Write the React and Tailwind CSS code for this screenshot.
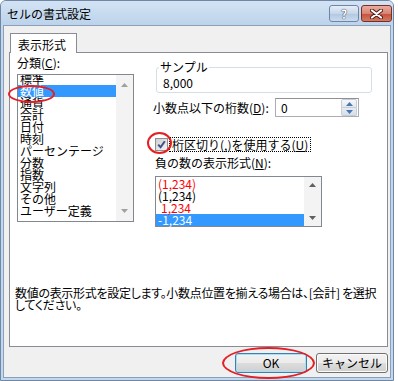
import React from "react";

const categories = ["標準", "数値", "通貨", "会計", "日付", "時刻", "パーセンテージ", "分数", "指数", "文字列", "その他", "ユーザー定義"];

function ScrollArrow({ up, color = "#a0a0a0" }) {
    return (
        <svg width="7" height="4" viewBox="0 0 7 4">
            <path d={up ? "M0 4 L3.5 0 L7 4 Z" : "M0 0 L3.5 4 L7 0 Z"} fill={color} />
        </svg>
    );
}

function Button({ children, primary }) {
    return (
        <div
            className={`w-[72px] h-[20px] flex items-center justify-center rounded-[3px] border ${primary
                ? "border-[#3c7fb1] shadow-[inset_0_0_0_1px_#a6e0f8]"
                : "border-[#707070] shadow-[inset_0_0_0_1px_#fbfbfb]"
                } bg-[linear-gradient(#f2f2f2_0%,#ebebeb_50%,#dddddd_51%,#cfcfcf_100%)]`}
        >
            {children}
        </div>
    );
}

export default function App() {
    return (
        <div className="relative w-[398px] h-[381px] bg-white text-[12px] leading-[12px] text-black font-['Noto_Sans_CJK_JP',sans-serif]">
            <div className="w-[394px] h-[381px] flex flex-col rounded-t-[6px] border border-[#6f87a5] bg-[#c2d8ee]">
                {/* title bar */}
                <div className="h-[24px] flex items-start bg-[linear-gradient(#d3e3f4,#bcd3eb)] rounded-t-[5px]">
                    <span className="mt-[7px] ml-[6px] text-[12px] text-black">セルの書式設定</span>
                    <div className="ml-auto mt-[4px] mr-[1px] flex gap-[2px]">
                        <div className="w-[30px] h-[17px] rounded-[3px] border border-[#6e86a6] bg-[linear-gradient(#e6eef8,#c5d6ea_50%,#b2c7e0_51%,#c9dbef)] flex items-center justify-center text-[12px] leading-[12px] font-bold text-white [text-shadow:0_0_1px_#1f2f44,0_0_1px_#1f2f44]">
                            ?
                        </div>
                        <div className="w-[31px] h-[17px] rounded-[3px] border border-[#7b2e24] bg-[linear-gradient(#e9ada0,#d98372_50%,#c4513d_51%,#d27a62)] flex items-center justify-center">
                            <svg width="13" height="10" viewBox="0 0 13 10">
                                <path d="M2 1.5 L11 8.5 M11 1.5 L2 8.5" stroke="#4a1a14" strokeWidth="4" strokeLinecap="round" />
                                <path d="M2 1.5 L11 8.5 M11 1.5 L2 8.5" stroke="#ffffff" strokeWidth="2.2" strokeLinecap="round" />
                            </svg>
                        </div>
                    </div>
                </div>

                {/* body */}
                <div className="flex-1 mx-[2px] mb-[2px] border border-[#8ba0b8] bg-[#f0f0f0] flex flex-col">
                    <div className="pt-[7px] pl-[6px]">
                        <div className="relative z-10 -mb-px w-[67px] h-[20px] border border-b-0 border-[#898c95] bg-white pl-[7px] pt-[5px]">
                            表示形式
                        </div>
                    </div>

                    <div className="ml-[5px] w-[379px] h-[295px] border border-[#898c95] bg-white flex flex-col">
                        <div className="flex">
                            {/* category list */}
                            <div className="pl-[7px] pt-[4px]">
                                <div>分類(<span className="underline">C</span>):</div>
                                <div className="mt-[5px] w-[117px] h-[148px] border border-[#828790] flex overflow-hidden">
                                    <div className="flex-1 -mt-[2px]">
                                        {categories.map((c) => (
                                            <div
                                                key={c}
                                                className={`h-[12px] pl-[2px] ${c === "数値" ? "bg-[#3399ff] text-white" : ""}`}
                                            >
                                                {c}
                                            </div>
                                        ))}
                                    </div>
                                    <div className="w-[17px] bg-[#f3f3f3] flex flex-col items-center justify-between py-[8px]">
                                        <ScrollArrow up />
                                        <ScrollArrow />
                                    </div>
                                </div>
                            </div>

                            {/* right side */}
                            <div className="ml-[19px] pt-[4px] flex flex-col">
                                <div className="h-[12px]" />
                                <div className="relative -mt-[2px] ml-[3px] w-[216px] h-[26px] border border-[#d5dfe5] rounded-[3px] pl-[6px] pt-[9px]">
                                    <span className="absolute -top-[7px] left-[2px] bg-white px-[1px]">サンプル</span>
                                    8,000
                                </div>

                                <div className="mt-[5px] flex items-center">
                                    <div className="w-[122px]">
                                        小数点以下の桁数(<span className="underline">D</span>):
                                    </div>
                                    <div className="w-[84px] h-[19px] border border-[#abadb3] border-t-[#8e9196] bg-white flex items-center">
                                        <span className="flex-1 pl-[5px]">0</span>
                                        <div className="w-[16px] h-[17px] mr-px flex flex-col">
                                            <div className="flex-1 flex items-center justify-center border border-[#c6cdd7] rounded-t-[2px] bg-[linear-gradient(#f7f8fa,#e3e8ee)]">
                                                <ScrollArrow up color="#4a76b3" />
                                            </div>
                                            <div className="flex-1 flex items-center justify-center border border-t-0 border-[#c6cdd7] rounded-b-[2px] bg-[linear-gradient(#e8ecf1,#d8dfe8)]">
                                                <ScrollArrow color="#4a76b3" />
                                            </div>
                                        </div>
                                    </div>
                                </div>

                                <div className="mt-[20px] flex items-center">
                                    <div className="ml-[2px] w-[13px] h-[13px] border border-[#8e8f8f] bg-[linear-gradient(135deg,#cfcfcf,#f4f4f4)] flex items-center justify-center">
                                        <svg width="9" height="9" viewBox="0 0 9 9">
                                            <path d="M1.2 4.6 L3.6 7.2 L7.8 1.2" fill="none" stroke="#3c4f8c" strokeWidth="2" />
                                        </svg>
                                    </div>
                                    <div className="ml-px h-[15px] px-[2px] border border-dotted border-black flex items-center">
                                        桁区切り(,)を使用する(<span className="underline">U</span>)
                                    </div>
                                </div>

                                <div className="mt-[5px] ml-[2px]">
                                    負の数の表示形式(<span className="underline">N</span>):
                                </div>

                                <div className="mt-[7px] ml-[2px] w-[167px] h-[51px] border border-[#828790] flex">
                                    <div className="flex-1 pt-px">
                                        <div className="h-[12px] pl-[2px] text-[#ff0000]">(1,234)</div>
                                        <div className="h-[12px] pl-[2px]">(1,234)</div>
                                        <div className="h-[12px] pl-[5px] text-[#ff0000]">1,234</div>
                                        <div className="h-[12px] pl-[2px] bg-[#3399ff] text-white">-1,234</div>
                                    </div>
                                    <div className="w-[17px] bg-[#f3f3f3] flex flex-col items-center justify-between py-[6px]">
                                        <ScrollArrow up color="#606060" />
                                        <ScrollArrow color="#606060" />
                                    </div>
                                </div>
                            </div>
                        </div>

                        <div className="mt-[60px] pl-[5px] whitespace-nowrap tracking-[-0.3px] [font-feature-settings:'palt']">
                            <div>数値の表示形式を設定します。小数点位置を揃える場合は、[会計] を選択</div>
                            <div>してください。</div>
                        </div>
                    </div>

                    <div className="mt-[6px] pr-[2px] flex justify-end gap-[9px]">
                        <Button primary>OK</Button>
                        <Button>キャンセル</Button>
                    </div>
                </div>
            </div>

            {/* red annotation circles */}
            <div className="absolute left-[8px] top-[85px] w-[47px] h-[18px] rounded-[50%] border-2 border-[#e31e24]" />
            <div className="absolute left-[147px] top-[132px] w-[25px] h-[22px] rounded-[50%] border-2 border-[#e31e24]" />
            <div className="absolute left-[222px] top-[347px] w-[93px] h-[32px] rounded-[50%] border-2 border-[#e31e24]" />
        </div>
    );
}
